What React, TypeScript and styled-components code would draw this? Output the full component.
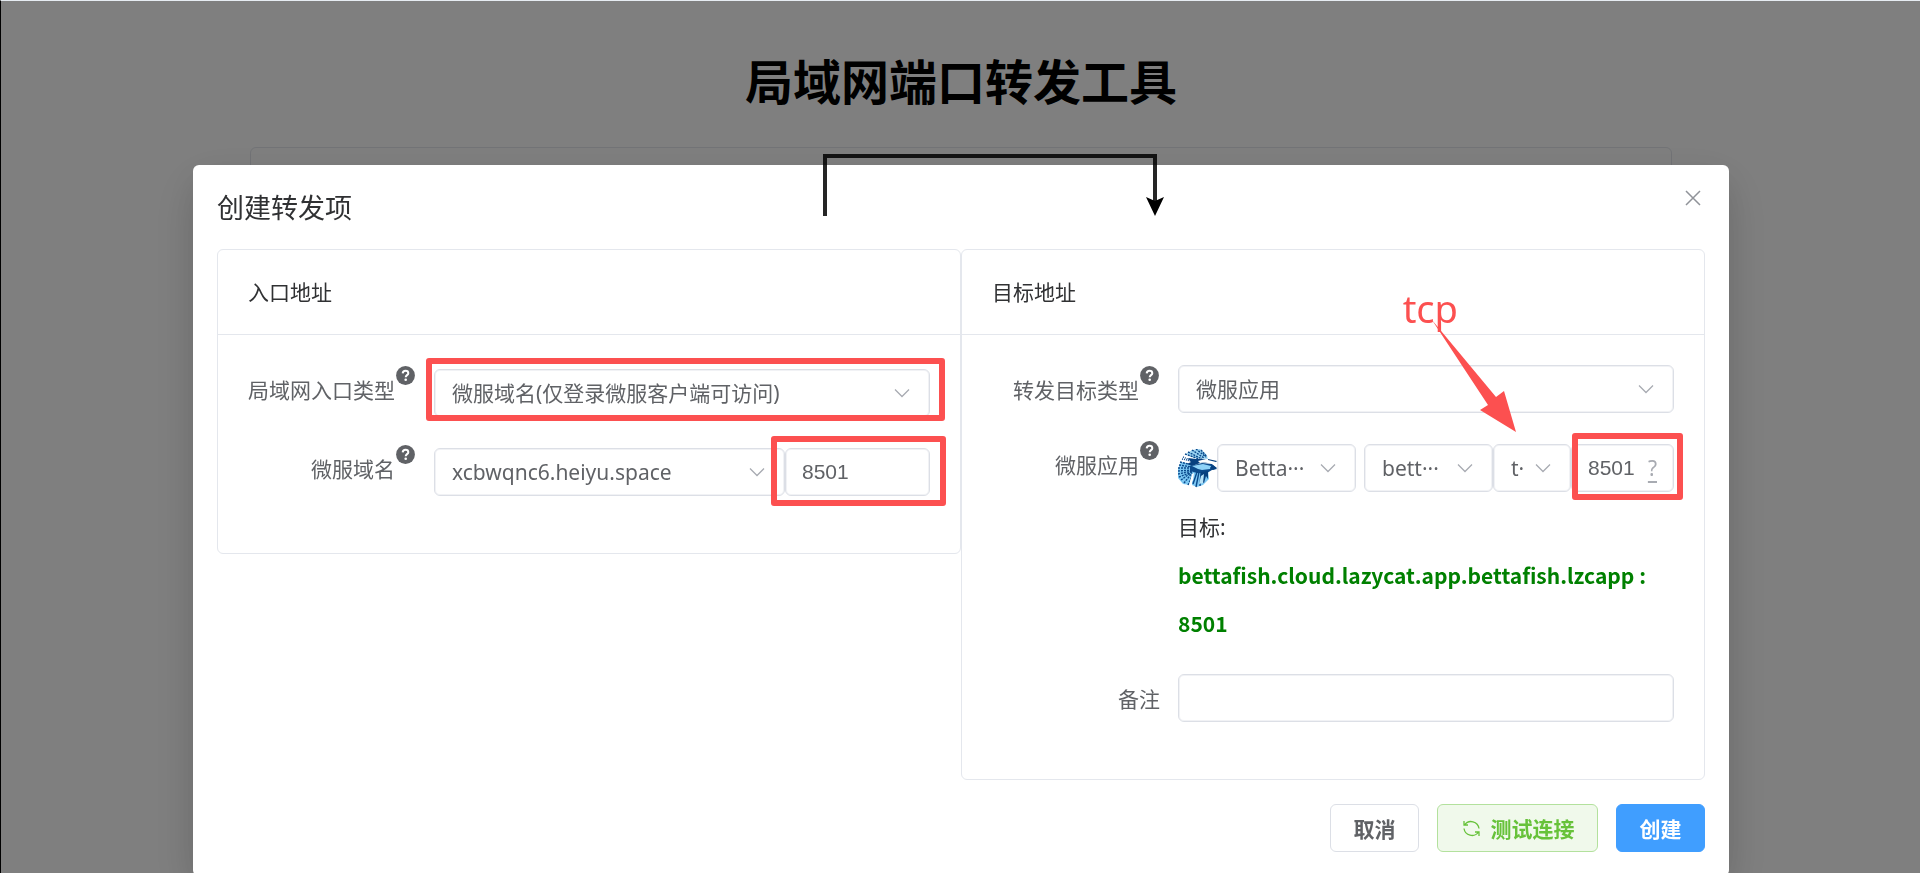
import React from "react";
import styled, { createGlobalStyle, css } from "styled-components";

const GlobalStyle = createGlobalStyle`
  *, *::before, *::after { box-sizing: border-box; }
  html, body, #root { height: 100%; }
  body {
    margin: 0;
    background: #ffffff;
    color: #303133;
    font-family: "Noto Sans", "Noto Sans CJK SC", sans-serif;
    font-size: 21px;
    overflow: hidden;
  }
  button, input, select { font: inherit; }
`;

const ACCENT = "#fc5050";

const Page = styled.main`
  height: 100%;
  padding: 47px 248px 0 250px;
`;

const PageTitle = styled.h1`
  margin: 0;
  font-size: 48px;
  line-height: 70px;
  font-weight: 700;
  text-align: center;
  color: #000000;
`;

const ListPanel = styled.section`
  margin-top: 30px;
  height: 400px;
  border: 1px solid #e4e7ed;
  border-radius: 6px;
`;

const Overlay = styled.div`
  position: fixed;
  inset: 0;
  border-left: 1px solid #000000;
  border-top: 1px solid #e6ecf2;
  background: rgba(0, 0, 0, 0.5);
  overflow: hidden;
  padding: 164px 0 0 1px;
`;

const Dialog = styled.div`
  position: relative;
  width: 80vw;
  margin: 0 auto;
  padding: 24px;
  background: #ffffff;
  border-radius: 6px;
  box-shadow: 0 18px 48px rgba(0, 0, 0, 0.12), 0 12px 36px rgba(0, 0, 0, 0.08);
`;

const DialogHeader = styled.header`
  display: flex;
  justify-content: space-between;
  align-items: flex-start;
  height: 60px;
`;

const DialogTitle = styled.h2`
  margin: 0;
  font-size: 27px;
  line-height: 38px;
  font-weight: 400;
`;

const CloseButton = styled.button`
  display: flex;
  width: 24px;
  height: 18px;
  padding: 0;
  border: 0;
  background: none;
  color: #909399;
`;

const Columns = styled.div`
  display: grid;
  grid-template-columns: 1fr 1fr;
  align-items: start;
`;

const Card = styled.section`
  border: 1px solid #e4e7ed;
  border-radius: 6px;
`;

const CardHeader = styled.h3`
  margin: 0;
  padding: 27px 30px;
  font-size: 21px;
  line-height: 30px;
  font-weight: 400;
  border-bottom: 1px solid #e4e7ed;
`;

const CardBody = styled.div`
  display: flex;
  flex-direction: column;
  gap: 27px;
  padding: 30px 30px 57px;
`;

const FormRow = styled.div`
  display: grid;
  grid-template-columns: 168px minmax(0, 1fr);
  column-gap: 18px;
`;

const Label = styled.label`
  display: flex;
  justify-content: flex-end;
  height: 48px;
  line-height: 50px;
  color: #606266;
  white-space: nowrap;
`;

const Controls = styled.div<{ $inset?: boolean }>`
  display: flex;
  align-items: center;
  min-width: 0;
  ${(p) => p.$inset && css`padding-top: 4px;`}
`;

const Field = styled.div<{ $width?: number; $gap?: number }>`
  position: relative;
  display: flex;
  min-width: 0;
  margin-left: ${(p) => p.$gap ?? 0}px;
  flex: ${(p) => (p.$width ? `0 0 ${p.$width}px` : "1 1 0")};
`;

const control = css`
  width: 100%;
  height: 48px;
  margin: 0;
  padding: 0 16px;
  border: 1px solid #dcdfe6;
  border-radius: 6px;
  box-shadow: inset 0 0 0 1px rgba(220, 223, 230, 0.4);
  background: #ffffff;
  color: #606266;
  outline: none;
`;

const Select = styled.select`
  ${control}
  appearance: none;
  padding: 0 40px 0 17px;
  overflow: hidden;
  white-space: nowrap;
`;

const Input = styled.input`
  ${control}
  font-family: "Liberation Sans", "Noto Sans CJK SC", sans-serif;
`;

const Chevron = styled.svg`
  position: absolute;
  right: 20px;
  top: 17px;
  width: 16px;
  height: 14px;
  pointer-events: none;
`;

const HintMark = styled.span`
  position: absolute;
  right: 17px;
  top: 9px;
  line-height: 30px;
  text-decoration: underline;
  text-underline-offset: 5px;
  color: #a8abb2;
`;

const Highlight = styled.span<{ $out: string }>`
  position: absolute;
  inset: ${(p) => p.$out};
  border: 6px solid ${ACCENT};
  border-radius: 3px;
  pointer-events: none;
`;

const HelpSvg = styled.svg`
  width: 19px;
  height: 19px;
  margin: 1px 1px 0;
`;

const Fish = styled.svg`
  flex: 0 0 39px;
  height: 39px;
`;

const Target = styled.p`
  grid-column: 2;
  margin: 11px 0 0;
  line-height: 48px;
  strong {
    display: block;
    font-family: "Noto Sans CJK SC", sans-serif;
    font-weight: 700;
    color: #008000;
  }
`;

const Footer = styled.footer`
  display: flex;
  justify-content: flex-end;
  gap: 18px;
  padding-top: 24px;
`;

const tones = {
  plain: { bg: "#ffffff", line: "#dcdfe6", ink: "#606266", width: 89 },
  success: { bg: "#f0f9eb", line: "#b3e19d", ink: "#67c23a", width: 161 },
  primary: { bg: "#409eff", line: "#409eff", ink: "#ffffff", width: 89 },
};

const Button = styled.button<{ $tone: keyof typeof tones }>`
  display: flex;
  align-items: center;
  justify-content: center;
  gap: 9px;
  height: 48px;
  min-width: ${(p) => tones[p.$tone].width}px;
  padding: 0 20px;
  border: 1px solid ${(p) => tones[p.$tone].line};
  border-radius: 6px;
  background: ${(p) => tones[p.$tone].bg};
  color: ${(p) => tones[p.$tone].ink};
  font-family: "Noto Sans CJK SC", sans-serif;
  font-weight: 600;
`;

const FlowArrow = styled.svg`
  position: absolute;
  left: calc(50% - 141px);
  top: -14px;
  width: 346px;
  height: 70px;
  pointer-events: none;
`;

const Note = styled.span`
  position: absolute;
  right: 271px;
  top: 120px;
  font-size: 38px;
  line-height: 46px;
  color: ${ACCENT};
`;

const NoteArrow = styled.svg`
  position: absolute;
  right: 209px;
  top: 155px;
  width: 90px;
  height: 114px;
  pointer-events: none;
`;

const HelpIcon = () => (
  <HelpSvg viewBox="0 0 19 19" aria-hidden="true">
    <circle cx="9.5" cy="9.5" r="9.4" fill="#606266" />
    <path d="M6.7 7.4C6.8 5.6 8 4.8 9.500 4.8c1.700 0 2.800.9 2.800 2.400 0 1.900-2.600 2-2.600 4" fill="none" stroke="#fff" strokeWidth="2" />
    <circle cx="9.700" cy="13.700" r="1.300" fill="#fff" />
  </HelpSvg>
);

const Arrow = () => (
  <Chevron viewBox="0 0 16 14" aria-hidden="true">
    <path d="M1 3.500l7 7 7-7" fill="none" stroke="#a8abb2" strokeWidth="1.300" />
  </Chevron>
);

const FishIcon = () => (
  <Fish viewBox="0 0 39 39" role="img" aria-label="BettaFish">
    <path d="M8 5L14 1 22 0 28 5 30 10 16 9z" fill="#9ad4f3" />
    <path d="M3 13L0 20 0 29 5 35 12 36 15 24 14 15z" fill="#7cc8f3" />
    <path d="M14 23L30 21 31 30 25 36 19 38 14 36z" fill="#7cc8f3" />
    <g fill="none" stroke="#0b4a8c" strokeWidth="1.4">
      <path d="M7 5l14 5M10 3l14 7M14 1l12 8M18 0l10 8M23 1l6 7" strokeDasharray="2 1" />
      <path d="M2 13l12 3M1 16l13 2M0 19l14 0M0 22l14-1M0 25l14-3M1 28l13-5M3 31l11-8M6 34l8-10M10 36l5-11" strokeDasharray="2 1" />
      <path d="M15 35l4-12M18 38l3-15M22 37l1-14" />
      <path d="M4 10l9 2M5 8l7 3" strokeDasharray="1 1" />
    </g>
    <path d="M10 9l8 1 10 0 2 3-8 1-8 3-5-2 4-2z" fill="#07407f" />
    <path d="M12 17l12-3 10 1 5 5-5 1-5 3-10 0-7-2z" fill="#0b4a8c" />
    <path d="M14 17l11-2 8 2-1 3-8 1-4-1z" fill="#8fd3f8" />
    <path d="M23 23l7-1 0 8-2-3-2 7-3-2z" fill="#07407f" />
    <path d="M23 27l3-2-1 9-4 1z" fill="#b9e3f8" />
    <path d="M14 25l2-1-1 7-3 6-1-1z" fill="#ffffff" />
    <path d="M20 12l8-2 10 2-2 3-8-2-6 1z" fill="#ffffff" />
    <path d="M30 10l9 2-1 1-8-2zM35 16l4 3-4 2-3-2z" fill="#07407f" />
  </Fish>
);

type PickProps = {
  id?: string;
  label?: string;
  text: string;
  width?: number;
  gap?: number;
  children?: React.ReactNode;
};

const Pick = ({ id, label, text, width, gap, children }: PickProps) => (
  <Field $width={width} $gap={gap}>
    <Select id={id} aria-label={label} defaultValue={text}>
      <option value={text}>{text}</option>
    </Select>
    <Arrow />
    {children}
  </Field>
);

export default function App() {
  return (
    <>
      <GlobalStyle />
      <Page>
        <PageTitle>局域网端口转发工具</PageTitle>
        <ListPanel />
      </Page>
      <Overlay>
        <Dialog role="dialog" aria-labelledby="dialog-title">
          <DialogHeader>
            <DialogTitle id="dialog-title">创建转发项</DialogTitle>
            <CloseButton aria-label="关闭">
              <svg width="24" height="18" viewBox="0 0 24 18">
                <path d="M5 2l14 14M19 2L5 16" stroke="currentColor" strokeWidth="1.500" />
              </svg>
            </CloseButton>
          </DialogHeader>
          <Columns>
            <Card>
              <CardHeader>入口地址</CardHeader>
              <CardBody>
                <FormRow>
                  <Label htmlFor="entry-type">局域网入口类型<HelpIcon /></Label>
                  <Controls $inset>
                    <Pick id="entry-type" text="微服域名(仅登录微服客户端可访问)">
                      <Highlight $out="-11px -15px -4px -8px" />
                    </Pick>
                  </Controls>
                </FormRow>
                <FormRow>
                  <Label htmlFor="entry-domain">微服域名<HelpIcon /></Label>
                  <Controls $inset>
                    <Pick id="entry-domain" text="xcbwqnc6.heiyu.space" />
                    <Field $width={145}>
                      <Input aria-label="端口" defaultValue="8501" />
                      <Highlight $out="-12px -16px -10px -14px" />
                    </Field>
                  </Controls>
                </FormRow>
              </CardBody>
            </Card>
            <Card>
              <CardHeader>目标地址</CardHeader>
              <CardBody>
                <FormRow>
                  <Label htmlFor="target-type">转发目标类型<HelpIcon /></Label>
                  <Controls>
                    <Pick id="target-type" text="微服应用" />
                  </Controls>
                </FormRow>
                <FormRow>
                  <Label htmlFor="target-app">微服应用<HelpIcon /></Label>
                  <Controls $inset>
                    <FishIcon />
                    <Pick id="target-app" text="Betta···" />
                    <Pick label="服务" text="bett···" width={129} gap={8} />
                    <Pick label="协议" text="t·" width={78} />
                    <Field $width={103}>
                      <Input aria-label="目标端口" defaultValue="8501" />
                      <HintMark>?</HintMark>
                      <Highlight $out="-11px -9px -8px 1px" />
                    </Field>
                  </Controls>
                  <Target>
                    目标:
                    <strong>bettafish.cloud.lazycat.app.bettafish.lzcapp : 8501</strong>
                  </Target>
                </FormRow>
                <FormRow>
                  <Label htmlFor="remark">备注</Label>
                  <Controls>
                    <Field>
                      <Input id="remark" />
                    </Field>
                  </Controls>
                </FormRow>
              </CardBody>
            </Card>
          </Columns>
          <Footer>
            <Button $tone="plain">取消</Button>
            <Button $tone="success">
              <svg width="21" height="21" viewBox="0 0 21 21" fill="none" stroke="currentColor" strokeWidth="1.300" aria-hidden="true">
                <path d="M3 3v4h4M3.500 7A8 8 0 0 1 18 10.500M18 18v-4h-4M17.500 14A8 8 0 0 1 3 10.500" />
              </svg>
              测试连接
            </Button>
            <Button $tone="primary">创建</Button>
          </Footer>
          <FlowArrow viewBox="0 0 346 70">
            <path d="M5 65V5H335V52" fill="none" stroke="#000000" strokeOpacity="0.85" strokeWidth="4" />
            <path d="M326 46L335 50L344 46L335 65Z" fill="#000000" />
          </FlowArrow>
          <Note>tcp</Note>
          <NoteArrow viewBox="0 0 90 114">
            <path d="M2 0L66 77L74 71L86 112L50 90L58 85Z" fill={ACCENT} />
          </NoteArrow>
        </Dialog>
      </Overlay>
    </>
  );
}
